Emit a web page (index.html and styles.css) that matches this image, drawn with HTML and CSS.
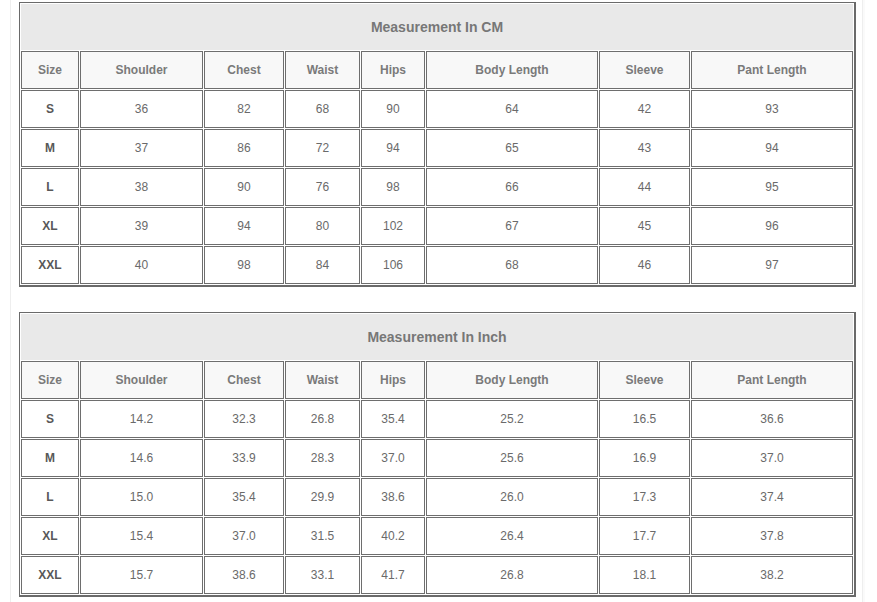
FILE: index.html
```html
<!DOCTYPE html>
<html>
<head>
<meta charset="utf-8">
<link rel="stylesheet" href="styles.css">
</head>
<body>
<div class="page">
  <table class="chart">
    <colgroup>
      <col class="c1"><col class="c2"><col class="c3"><col class="c4"><col class="c5"><col class="c6"><col class="c7"><col class="c8">
    </colgroup>
    <tr class="cap"><td colspan="8">Measurement In CM</td></tr>
    <tr class="head"><td>Size</td><td>Shoulder</td><td>Chest</td><td>Waist</td><td>Hips</td><td>Body Length</td><td>Sleeve</td><td>Pant Length</td></tr>
    <tr><td class="sz">S</td><td>36</td><td>82</td><td>68</td><td>90</td><td>64</td><td>42</td><td>93</td></tr>
    <tr><td class="sz">M</td><td>37</td><td>86</td><td>72</td><td>94</td><td>65</td><td>43</td><td>94</td></tr>
    <tr><td class="sz">L</td><td>38</td><td>90</td><td>76</td><td>98</td><td>66</td><td>44</td><td>95</td></tr>
    <tr><td class="sz">XL</td><td>39</td><td>94</td><td>80</td><td>102</td><td>67</td><td>45</td><td>96</td></tr>
    <tr><td class="sz">XXL</td><td>40</td><td>98</td><td>84</td><td>106</td><td>68</td><td>46</td><td>97</td></tr>
  </table>
  <table class="chart">
    <colgroup>
      <col class="c1"><col class="c2"><col class="c3"><col class="c4"><col class="c5"><col class="c6"><col class="c7"><col class="c8">
    </colgroup>
    <tr class="cap"><td colspan="8">Measurement In Inch</td></tr>
    <tr class="head"><td>Size</td><td>Shoulder</td><td>Chest</td><td>Waist</td><td>Hips</td><td>Body Length</td><td>Sleeve</td><td>Pant Length</td></tr>
    <tr><td class="sz">S</td><td>14.2</td><td>32.3</td><td>26.8</td><td>35.4</td><td>25.2</td><td>16.5</td><td>36.6</td></tr>
    <tr><td class="sz">M</td><td>14.6</td><td>33.9</td><td>28.3</td><td>37.0</td><td>25.6</td><td>16.9</td><td>37.0</td></tr>
    <tr><td class="sz">L</td><td>15.0</td><td>35.4</td><td>29.9</td><td>38.6</td><td>26.0</td><td>17.3</td><td>37.4</td></tr>
    <tr><td class="sz">XL</td><td>15.4</td><td>37.0</td><td>31.5</td><td>40.2</td><td>26.4</td><td>17.7</td><td>37.8</td></tr>
    <tr><td class="sz">XXL</td><td>15.7</td><td>38.6</td><td>33.1</td><td>41.7</td><td>26.8</td><td>18.1</td><td>38.2</td></tr>
  </table>
</div>
</body>
</html>
```
FILE: styles.css
```css
html, body {
  margin: 0;
  padding: 0;
  background: #ffffff;
}
body {
  font-family: "Liberation Sans", Arial, sans-serif;
  width: 877px;
  height: 602px;
  overflow: hidden;
}
.page {
  margin-left: 10px;
  width: 843px;
  height: 602px;
  border-left: 1px solid #eeeeee;
  border-right: 1px solid #eeeeee;
  box-shadow: 2px 0 0 #fafafa;
  padding: 2px 0 0 8px;
  box-sizing: content-box;
  display: flex;
  flex-direction: column;
  gap: 25px;
}
.chart {
  table-layout: fixed;
  width: 837px;
  border-collapse: separate;
  border-spacing: 1px;
  border: 1px solid #6a6a6a;
  border-right-width: 2px;
  border-bottom-width: 2px;
  background: #ffffff;
}
.c1 { width: 58px; }
.c2 { width: 123px; }
.c3 { width: 80px; }
.c4 { width: 75px; }
.c5 { width: 64px; }
.c6 { width: 172px; }
.c7 { width: 91px; }
.c8 { width: 162px; }
.chart td {
  box-sizing: border-box;
  height: 38px;
  padding: 0;
  border: 1px solid #6e6e6e;
  text-align: center;
  vertical-align: middle;
  font-size: 12px;
  color: #6a6a6a;
  white-space: nowrap;
}
.chart .cap td {
  height: 46px;
  background: #e9e9e9;
  border-color: #e9e9e9;
  font-size: 14px;
  font-weight: bold;
  color: #777777;
}
.chart .head td {
  background: #f8f8f8;
  font-weight: bold;
  color: #7a7a7a;
}
.chart td.sz {
  font-weight: bold;
  color: #585858;
}
```
